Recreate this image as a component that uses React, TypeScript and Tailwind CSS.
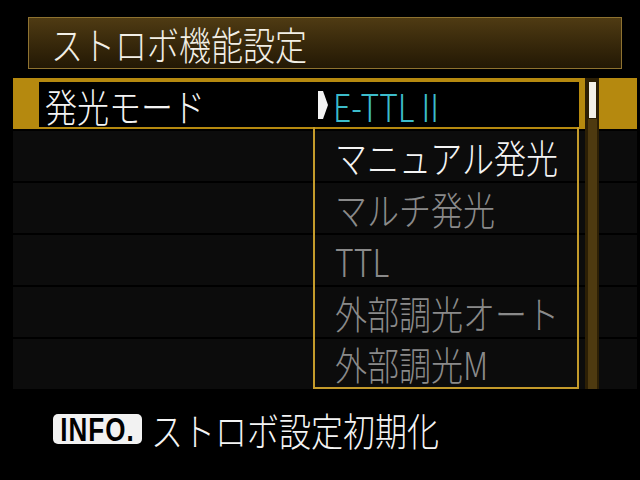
import React from "react";

const jp = "font-['Noto_Sans_CJK_JP','Noto_Sans',sans-serif]";

const items = [
  { label: "マニュアル発光", active: true },
  { label: "マルチ発光", active: false },
  { label: "TTL", active: false },
  { label: "外部調光オート", active: false },
  { label: "外部調光M", active: false },
];

function Arrow() {
  return (
    <svg width="10" height="28" viewBox="0 0 10 28" className="shrink-0">
      <path d="M0 0 L5 0 L10 14 L5 28 L0 28 Z" fill="#f4f4f4" />
    </svg>
  );
}

export default function App() {
  return (
    <div className={`h-[480px] w-[640px] overflow-hidden bg-black font-light ${jp}`}>
      {/* title */}
      <div className="ml-[28px] mt-[17px] flex h-[52px] w-[594px] items-center border border-[#8e7230] bg-gradient-to-b from-[#4f3b13] to-[#231805] pl-[22px]">
        <div className="scale-y-[1.2] text-[32px] leading-none text-[#f2efe6]">
          ストロボ機能設定
        </div>
      </div>

      {/* settings list */}
      <div className="relative ml-[13px] mt-[9px] w-[624px]">
        <div className="flex h-[51px] bg-[#b5890f] pl-[26px] pt-[4px]">
          <div className="flex h-[45px] w-[538px] items-center bg-black pl-[6px]">
            <div className="scale-y-[1.2] text-[32px] leading-none text-[#f4f4f4]">
              発光モード
            </div>
          </div>
        </div>
        <div className="mt-[2px] flex flex-col gap-[2px]">
          {[0, 1, 2, 3, 4].map((i) => (
            <div key={i} className="h-[50px] bg-[#0c0c0c]" />
          ))}
        </div>

        {/* dropdown */}
        <div className="absolute left-[300px] top-[4px] w-[266px]">
          <div className="flex h-[45px] items-center bg-black pl-[5px]">
            <Arrow />
            <div className="ml-[5px] scale-y-[1.2] text-[32px] leading-none text-[#3cbccb]">
              E-TTL II
            </div>
          </div>
          <div className="flex flex-col border-x-2 border-b-2 border-[#c49b2b] pt-[3px]">
            {items.map((it, i) => (
              <div
                key={it.label}
                className={`flex items-center pl-[20px] ${i === items.length - 1 ? "h-[49px]" : "h-[52px]"}`}
              >
                <div
                  className={`scale-y-[1.2] text-[32px] leading-none ${
                    it.active ? "text-[#f4f4f4]" : "text-[#8a8a8a]"
                  }`}
                >
                  {it.label}
                </div>
              </div>
            ))}
          </div>
        </div>

        {/* scroll bar */}
        <div className="absolute left-[572px] top-0 flex h-[311px] w-[14px] flex-col items-center bg-[#2c1f05] pt-[3px]">
          <div className="flex h-full w-[9px] flex-col bg-[#4e3a10]">
            <div className="h-[38px] w-[9px] border border-[#2a1d04] bg-[#f3f0e8]" />
          </div>
        </div>
      </div>

      {/* footer */}
      <div className="ml-[53px] mt-[24px] flex items-center">
        <div className="flex h-[30px] w-[89px] items-center justify-center rounded-[5px] bg-[#f2f2f2]">
          <div className="scale-y-[1.3] font-['Liberation_Sans',sans-serif] text-[26px] font-bold leading-none tracking-[1px] text-black">
            INFO.
          </div>
        </div>
        <div className="ml-[9px] scale-y-[1.2] text-[32px] leading-none text-[#f4f4f4]">
          ストロボ設定初期化
        </div>
      </div>
    </div>
  );
}
